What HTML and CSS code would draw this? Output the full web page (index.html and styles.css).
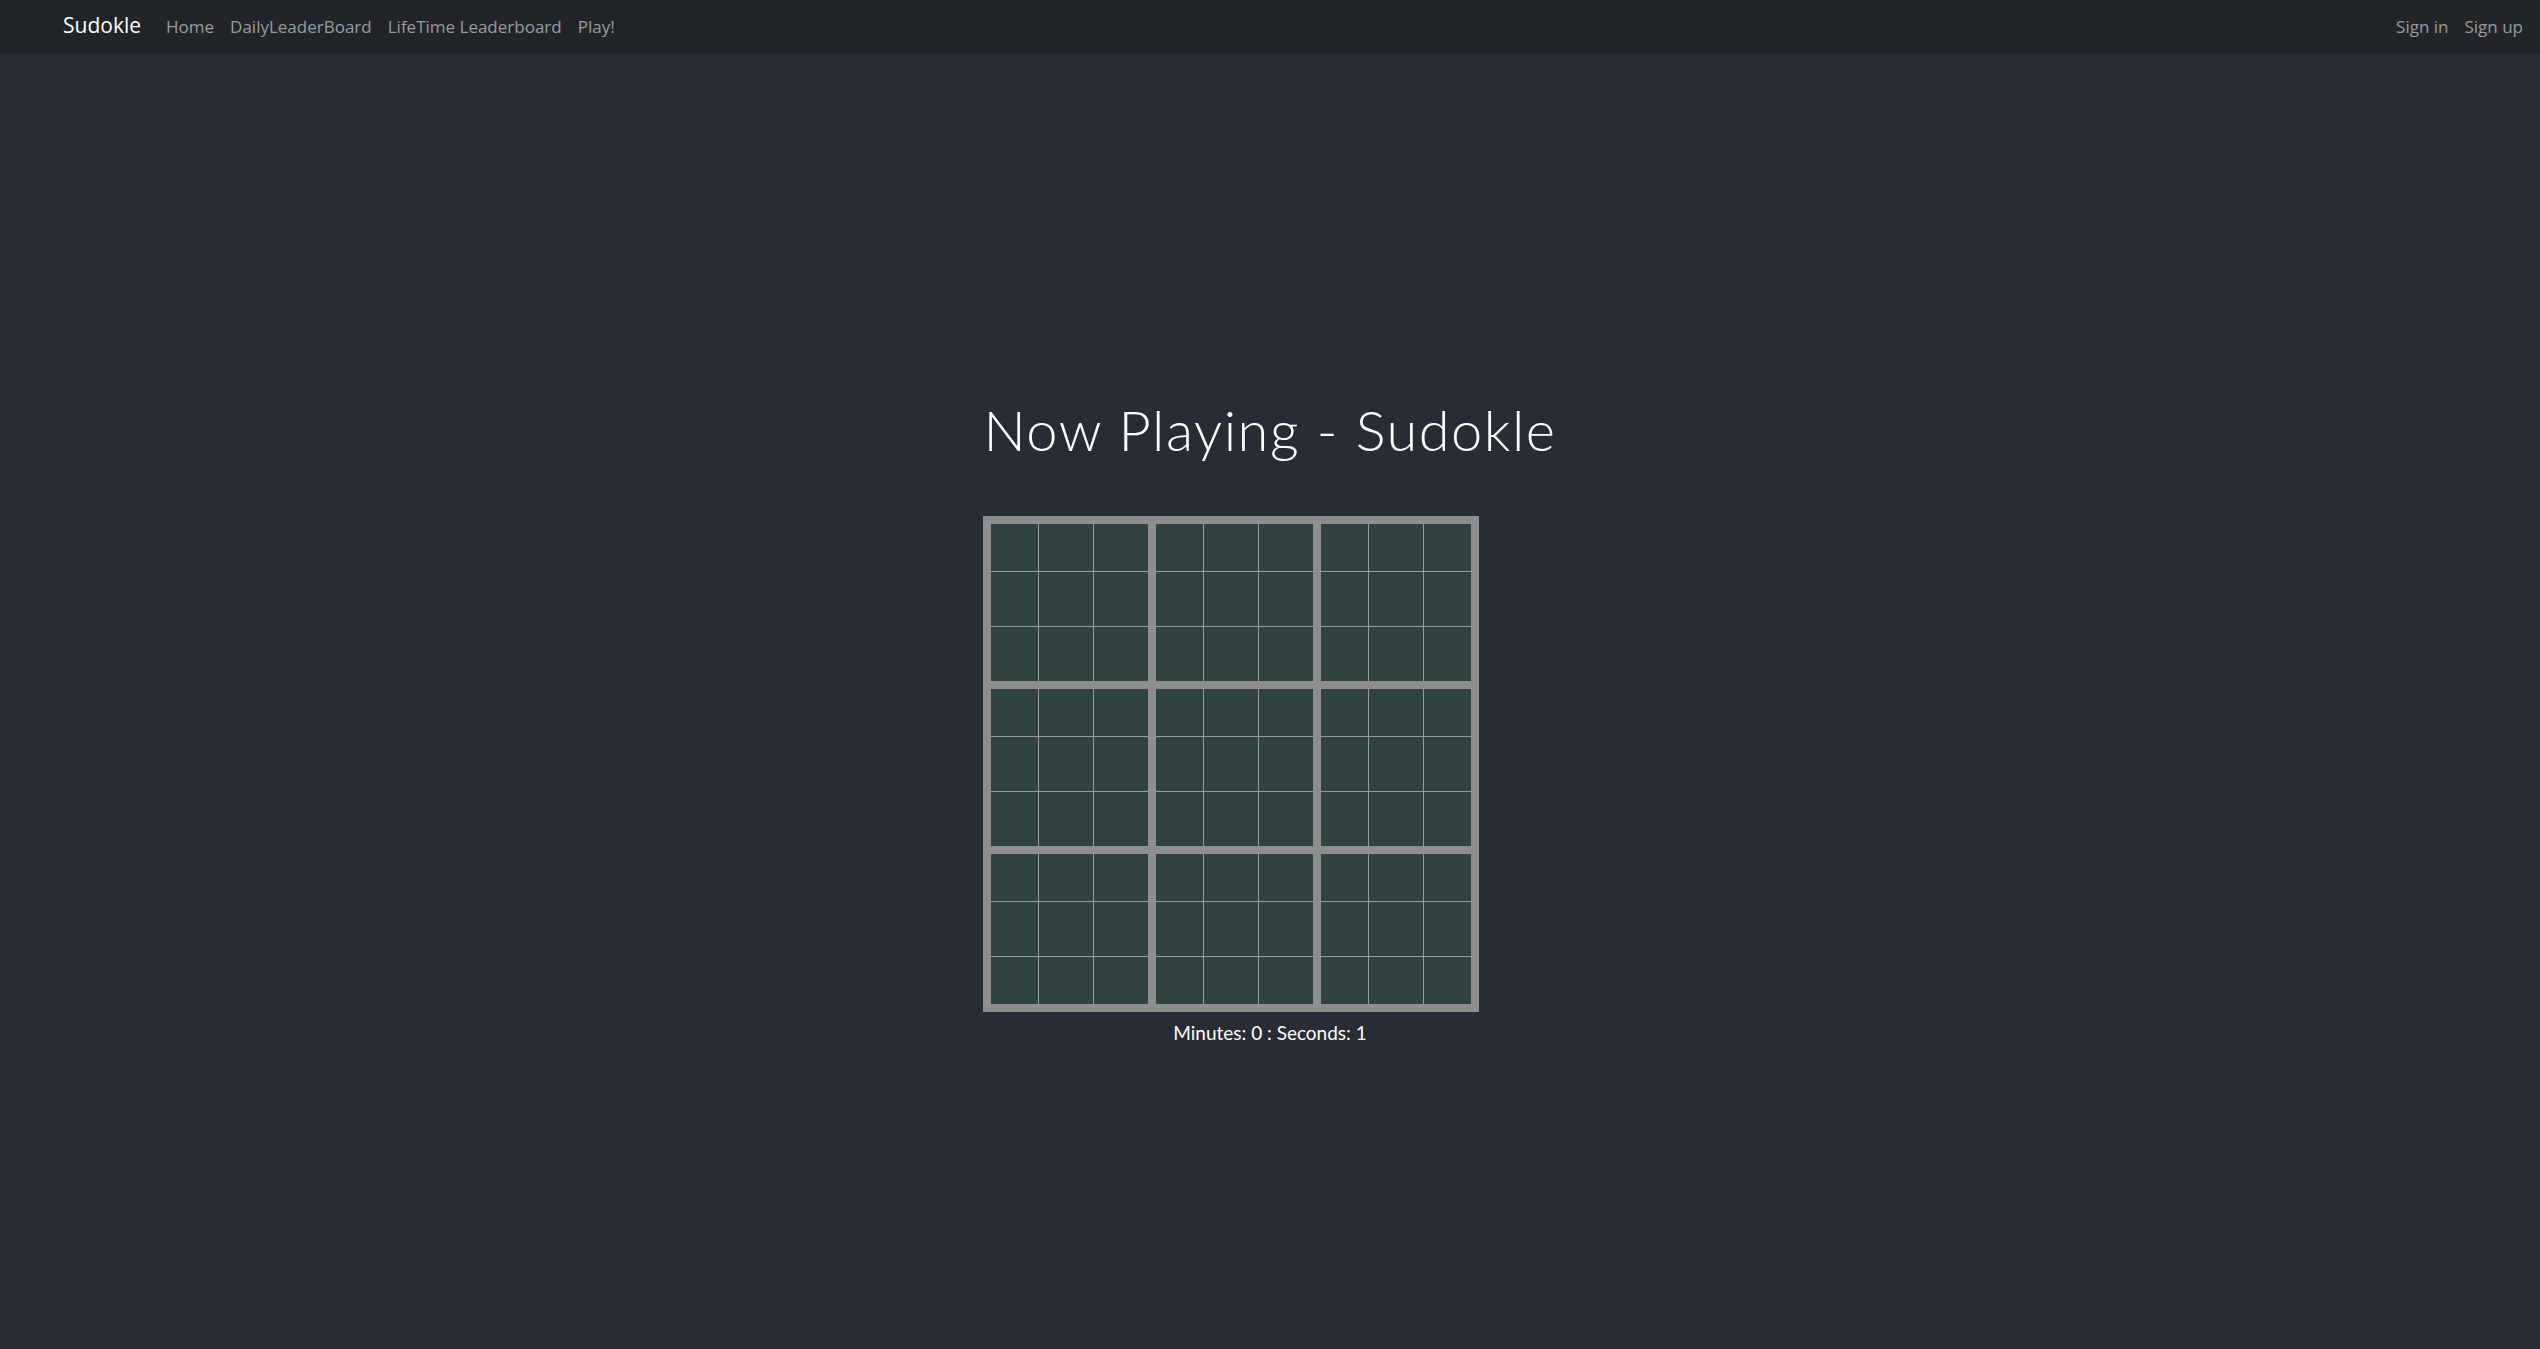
FILE: index.html
```html
<!DOCTYPE html>
<html lang="en">
<head>
<meta charset="utf-8">
<title>Sudokle</title>
<link rel="stylesheet" href="styles.css">
</head>
<body>
<nav class="navbar">
  <a class="brand" href="#">Sudokle</a>
  <ul class="nav-links">
    <li><a href="#">Home</a></li>
    <li><a href="#">DailyLeaderBoard</a></li>
    <li><a href="#">LifeTime Leaderboard</a></li>
    <li><a href="#">Play!</a></li>
  </ul>
  <ul class="nav-links nav-right">
    <li><a href="#">Sign in</a></li>
    <li><a href="#">Sign up</a></li>
  </ul>
</nav>
<main class="game">
  <h1 class="title">Now Playing - Sudokle</h1>
  <div class="board-wrap">
    <div class="board">
      <div class="box"><div class="cell"></div><div class="cell"></div><div class="cell"></div><div class="cell"></div><div class="cell"></div><div class="cell"></div><div class="cell"></div><div class="cell"></div><div class="cell"></div></div>
      <div class="box"><div class="cell"></div><div class="cell"></div><div class="cell"></div><div class="cell"></div><div class="cell"></div><div class="cell"></div><div class="cell"></div><div class="cell"></div><div class="cell"></div></div>
      <div class="box"><div class="cell"></div><div class="cell"></div><div class="cell"></div><div class="cell"></div><div class="cell"></div><div class="cell"></div><div class="cell"></div><div class="cell"></div><div class="cell"></div></div>
      <div class="box"><div class="cell"></div><div class="cell"></div><div class="cell"></div><div class="cell"></div><div class="cell"></div><div class="cell"></div><div class="cell"></div><div class="cell"></div><div class="cell"></div></div>
      <div class="box"><div class="cell"></div><div class="cell"></div><div class="cell"></div><div class="cell"></div><div class="cell"></div><div class="cell"></div><div class="cell"></div><div class="cell"></div><div class="cell"></div></div>
      <div class="box"><div class="cell"></div><div class="cell"></div><div class="cell"></div><div class="cell"></div><div class="cell"></div><div class="cell"></div><div class="cell"></div><div class="cell"></div><div class="cell"></div></div>
      <div class="box"><div class="cell"></div><div class="cell"></div><div class="cell"></div><div class="cell"></div><div class="cell"></div><div class="cell"></div><div class="cell"></div><div class="cell"></div><div class="cell"></div></div>
      <div class="box"><div class="cell"></div><div class="cell"></div><div class="cell"></div><div class="cell"></div><div class="cell"></div><div class="cell"></div><div class="cell"></div><div class="cell"></div><div class="cell"></div></div>
      <div class="box"><div class="cell"></div><div class="cell"></div><div class="cell"></div><div class="cell"></div><div class="cell"></div><div class="cell"></div><div class="cell"></div><div class="cell"></div><div class="cell"></div></div>
    </div>
  </div>
  <p class="timer">Minutes: 0 : Seconds: 1</p>
</main>
</body>
</html>
```
FILE: styles.css
```css
html, body {
  margin: 0;
  padding: 0;
}
body {
  background: #282c34;
  min-height: 1349px;
  font-family: "Open Sans", "Liberation Sans", sans-serif;
}
.navbar {
  display: flex;
  align-items: center;
  height: 53px;
  padding: 0 9px 0 63px;
  background: #212529;
  box-sizing: border-box;
}
.brand {
  color: #ffffff;
  font-size: 21px;
  text-decoration: none;
  margin-right: 17px;
  line-height: 1;
  padding-bottom: 2px;
}
.nav-links {
  display: flex;
  list-style: none;
  margin: 0;
  padding: 0;
}
.nav-links a {
  display: block;
  padding: 0 8px;
  color: #9a9c9e;
  font-size: 17px;
  text-decoration: none;
  line-height: 1;
}
.nav-right {
  margin-left: auto;
}
.game {
  display: flex;
  flex-direction: column;
  align-items: center;
  padding-top: 347px;
}
.title {
  margin: 0;
  color: #ffffff;
  font-family: "Lato", "Liberation Sans", sans-serif;
  font-weight: 300;
  font-size: 56px;
  line-height: 60px;
  letter-spacing: 1.5px;
}
.board-wrap {
  width: 574px;
  margin-top: 56px;
}
.board {
  display: grid;
  grid-template-columns: 157px 157px 150px;
  grid-template-rows: 157px 157px 150px;
  gap: 8px;
  width: fit-content;
  border: 8px solid #8e8e8e;
  background: #8e8e8e;
}
.box {
  display: grid;
  grid-template-columns: 47px 54px 54px;
  grid-template-rows: 47px 54px 54px;
  gap: 1px;
  background: #9c9c9c;
}
.box:nth-child(3n) {
  grid-template-columns: 47px 54px 47px;
}
.box:nth-child(n+7) {
  grid-template-rows: 47px 54px 47px;
}
.cell {
  background: #2f4442;
}
.timer {
  margin: 10px 0 0;
  color: #ffffff;
  font-family: "Lato", "Liberation Sans", sans-serif;
  font-size: 19px;
  line-height: 22px;
}
```
